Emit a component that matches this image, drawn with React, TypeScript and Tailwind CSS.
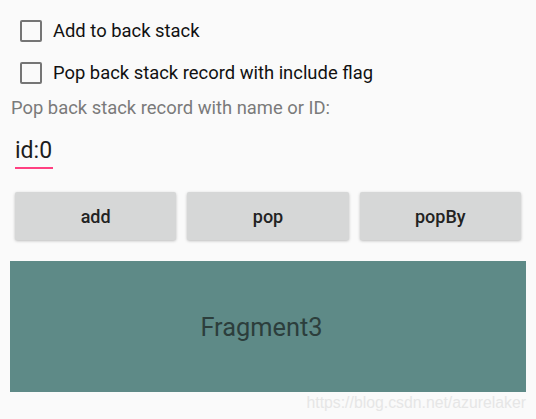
import { useState } from "react";

export default function App() {
    const [addToStack, setAddToStack] = useState(false);
    const [includeFlag, setIncludeFlag] = useState(false);
    const [recordId, setRecordId] = useState("id:0");

    return (
        <div className="w-[536px] h-[419px] bg-[#fafafa] overflow-hidden relative font-['Roboto',sans-serif]">
            <div className="flex flex-col pt-[19px]">
                <CheckRow checked={addToStack} onToggle={() => setAddToStack(!addToStack)} label="Add to back stack" />
                <div className="h-[19px]" />
                <CheckRow checked={includeFlag} onToggle={() => setIncludeFlag(!includeFlag)} label="Pop back stack record with include flag" />

                <p className="ml-[11px] mt-[12px] text-[18.4px] leading-[24px] text-[#7a7a7a]">
                    Pop back stack record with name or ID:
                </p>

                <div className="ml-[15px] mt-[17px] w-[38px]">
                    <input
                        value={recordId}
                        onChange={(e) => setRecordId(e.target.value)}
                        className="w-full bg-transparent outline-none text-[23px] leading-[28px] text-[#1c1c1c] p-0"
                    />
                    <div className="h-[2px] bg-[#ff4081] mt-[2px]" />
                </div>

                {/* action buttons */}
                <div className="flex gap-[11px] px-[15px] mt-[23px]">
                    {["add", "pop", "popBy"].map((name) => (
                        <button
                            key={name}
                            className="flex-1 h-[48px] rounded-[2px] bg-[#d6d7d7] text-[18px] font-medium text-[#222] shadow-[0_1px_3px_rgba(0,0,0,0.25)]"
                        >
                            {name}
                        </button>
                    ))}
                </div>

                <div className="mx-[10px] mt-[21px] h-[131px] bg-[#5e8a87] flex justify-center pt-[49px] pr-[13px]">
                    <span className="text-[25.4px] leading-[34px] text-[#2c3e3c] h-fit">Fragment3</span>
                </div>
            </div>

            <span className="absolute right-[10px] top-[393px] text-[15.8px] leading-[20px] text-[#e6e6e6] font-['Liberation_Sans',sans-serif]">
                https://blog.csdn.net/azurelaker
            </span>
        </div>
    );
}

function CheckRow({ checked, onToggle, label }: { checked: boolean; onToggle: () => void; label: string }) {
    return (
        <button onClick={onToggle} className="flex items-center ml-[20px] gap-[11px] text-left">
            <span className="w-[22px] h-[22px] rounded-[2px] border-2 border-[#757575] flex items-center justify-center">
                {checked && <span className="w-[12px] h-[12px] bg-[#ff4081]" />}
            </span>
            <span className="text-[18.4px] leading-[23px] text-[#111]">{label}</span>
        </button>
    );
}
